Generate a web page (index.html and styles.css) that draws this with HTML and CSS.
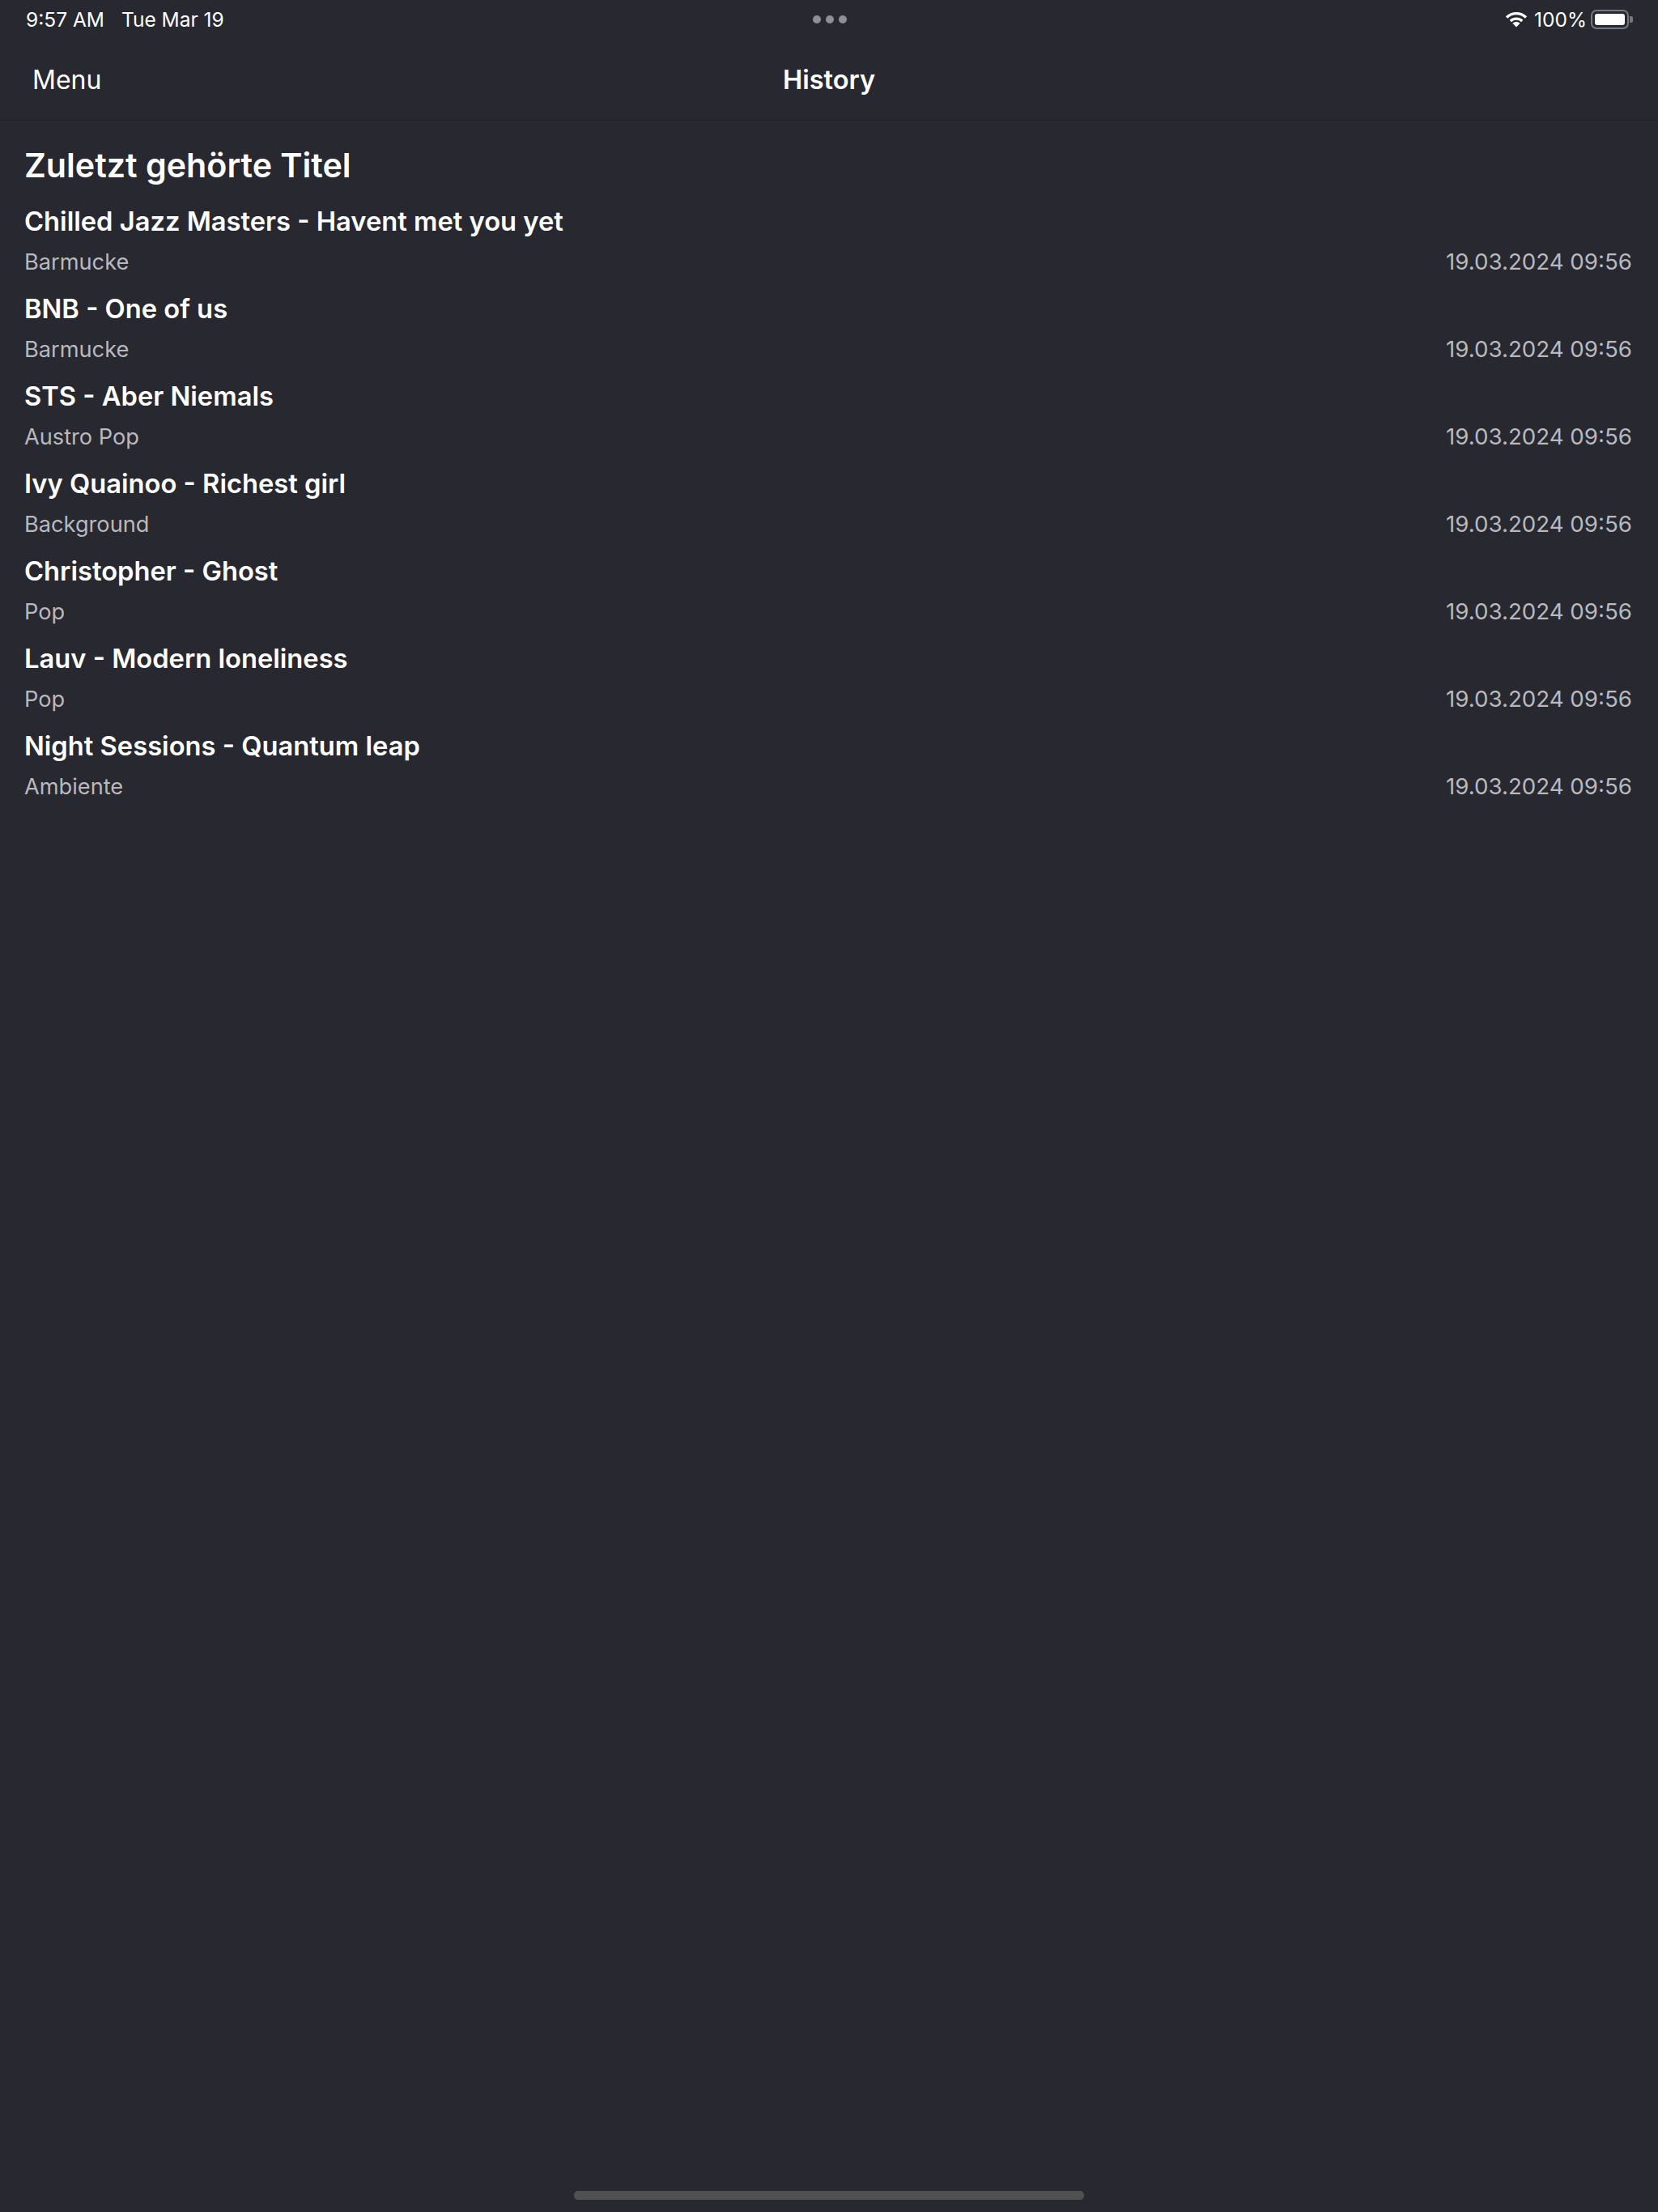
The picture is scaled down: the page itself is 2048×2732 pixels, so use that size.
FILE: index.html
```html
<!DOCTYPE html>
<html lang="en">
<head>
    <meta charset="UTF-8">
    <title>History</title>
    <link rel="stylesheet" href="styles.css">
</head>
<body>
    <div class="app">
        <div class="status-bar">
            <div class="status-left">
                <span>9:57 AM</span>
                <span>Tue Mar 19</span>
            </div>
            <div class="status-dots">
                <span class="dot"></span>
                <span class="dot"></span>
                <span class="dot"></span>
            </div>
            <div class="status-right">
                <svg class="wifi" viewBox="0 0 28 20" fill="none" stroke="#fff" stroke-width="3.4">
                    <path d="M2 7.5C9 1 19 1 26 7.5" />
                    <path d="M6.8 12C11 8.2 17 8.2 21.2 12" />
                    <path fill="#fff" stroke="none" d="M14 19.5l-4.6-4.8c2.6-2.2 6.6-2.2 9.2 0z" />
                </svg>
                <span>100%</span>
                <div class="battery">
                    <div class="battery-fill"></div>
                </div>
                <div class="battery-cap"></div>
            </div>
        </div>

        <div class="nav-bar">
            <a class="nav-menu">Menu</a>
            <div class="nav-title">History</div>
        </div>

        <div class="content">
            <h1>Zuletzt gehörte Titel</h1>

            <div class="track">
                <div class="track-title">Chilled Jazz Masters - Havent met you yet</div>
                <div class="track-meta"><span>Barmucke</span><span class="track-date">19.03.2024 09:56</span></div>
            </div>
            <div class="track">
                <div class="track-title">BNB - One of us</div>
                <div class="track-meta"><span>Barmucke</span><span class="track-date">19.03.2024 09:56</span></div>
            </div>
            <div class="track">
                <div class="track-title">STS - Aber Niemals</div>
                <div class="track-meta"><span>Austro Pop</span><span class="track-date">19.03.2024 09:56</span></div>
            </div>
            <div class="track">
                <div class="track-title">Ivy Quainoo - Richest girl</div>
                <div class="track-meta"><span>Background</span><span class="track-date">19.03.2024 09:56</span></div>
            </div>
            <div class="track">
                <div class="track-title">Christopher - Ghost</div>
                <div class="track-meta"><span>Pop</span><span class="track-date">19.03.2024 09:56</span></div>
            </div>
            <div class="track">
                <div class="track-title">Lauv - Modern loneliness</div>
                <div class="track-meta"><span>Pop</span><span class="track-date">19.03.2024 09:56</span></div>
            </div>
            <div class="track">
                <div class="track-title">Night Sessions - Quantum leap</div>
                <div class="track-meta"><span>Ambiente</span><span class="track-date">19.03.2024 09:56</span></div>
            </div>
        </div>

        <div class="home-bar"><div class="home-indicator"></div></div>
    </div>
</body>
</html>
```

FILE: styles.css
```css
:root {
    --bg: #272830;
    --text-primary: #ffffff;
    --text-secondary: #b9b9bd;
    --border-color: #202127;
}

body {
    margin: 0;
    background-color: var(--bg);
    color: var(--text-primary);
    font-family: Inter, "Liberation Sans", sans-serif;
}

.app {
    height: 2732px;
    display: flex;
    flex-direction: column;
}

.status-bar {
    height: 48px;
    display: grid;
    grid-template-columns: 1fr auto 1fr;
    align-items: center;
    padding: 0 31px 0 32px;
    font-size: 24.5px;
}

.status-left {
    display: flex;
    gap: 21px;
}

.status-dots {
    display: flex;
    gap: 6px;
}

.dot {
    width: 10px;
    height: 10px;
    border-radius: 50%;
    background-color: #8f8f97;
}

.status-right {
    display: flex;
    align-items: center;
    justify-content: flex-end;
}

.wifi {
    width: 28px;
    height: 20px;
    margin-right: 8px;
}

.battery {
    width: 47px;
    height: 24px;
    margin-left: 5px;
    padding: 3px;
    box-sizing: border-box;
    border: 2px solid #77777d;
    border-radius: 7px;
}

.battery-fill {
    height: 100%;
    background-color: #fff;
    border-radius: 3px;
}

.battery-cap {
    width: 4px;
    height: 8px;
    margin-left: 1px;
    background-color: #77777d;
    border-radius: 0 2px 2px 0;
}

.nav-bar {
    height: 100px;
    display: grid;
    grid-template-columns: 1fr auto 1fr;
    align-items: center;
    padding: 0 40px;
    font-size: 32px;
    border-bottom: 1px solid var(--border-color);
}

.nav-title {
    font-weight: 600;
    font-size: 32.5px;
}

.content {
    flex: 1;
    padding: 0 32px 0 30px;
}

h1 {
    margin: 31px 0 21px;
    font-size: 41.2px;
    line-height: 48px;
    font-weight: 600;
}

.track {
    height: 108px;
}

.track-title {
    font-size: 32.7px;
    line-height: 48px;
    font-weight: 600;
}

.track-meta {
    display: flex;
    justify-content: space-between;
    align-items: baseline;
    margin-top: 6px;
    font-size: 27.2px;
    line-height: 40px;
    color: var(--text-secondary);
}

.track-date {
    font-size: 27.7px;
}

.home-bar {
    height: 26px;
    display: flex;
    justify-content: center;
}

.home-indicator {
    width: 630px;
    height: 11px;
    background-color: #505050;
    border-radius: 5px;
}
```
